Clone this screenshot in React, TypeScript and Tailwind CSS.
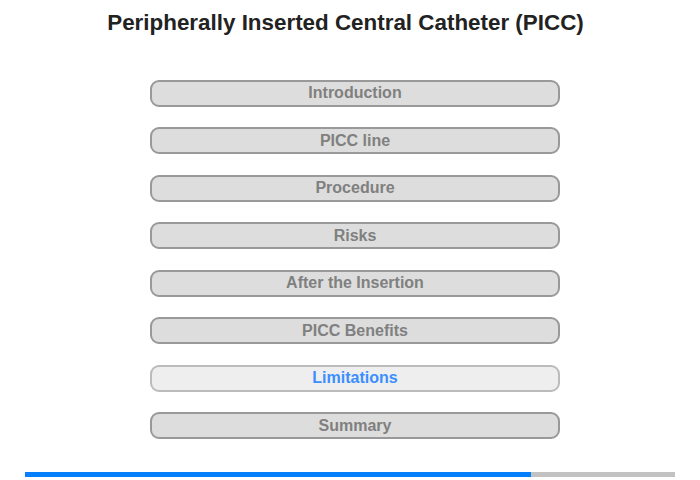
const sections = [
  "Introduction",
  "PICC line",
  "Procedure",
  "Risks",
  "After the Insertion",
  "PICC Benefits",
  "Limitations",
  "Summary",
];

const active = "Limitations";

export default function App() {
  return (
    <div className="w-[700px] h-[480px] bg-white overflow-hidden font-['Liberation_Sans',Arial,sans-serif]">
      {/* title */}
      <h1 className="pt-[10px] pr-[9px] text-center text-[22.4px] leading-[26px] font-bold text-[#222]">
        Peripherally Inserted Central Catheter (PICC)
      </h1>

      {/* menu */}
      <div className="mt-[43.5px] ml-[150px] w-[410px] flex flex-col gap-[20.5px]">
        {sections.map((s) => (
          <button
            key={s}
            className={
              s === active
                ? "h-[27px] rounded-[9px] border-2 border-[#bbb] bg-[#eee] text-[16px] font-bold text-[#3b8eff] leading-none"
                : "h-[27px] rounded-[9px] border-2 border-[#999] bg-[#ddd] text-[16px] font-bold text-[#808080] leading-none"
            }
          >
            {s}
          </button>
        ))}
      </div>

      {/* progress */}
      <div className="mt-[32.5px] mx-[25px] h-[5px] bg-[#c2c2c2] flex">
        <div className="h-full w-[506px] bg-[#0480ff]" />
      </div>
    </div>
  );
}
